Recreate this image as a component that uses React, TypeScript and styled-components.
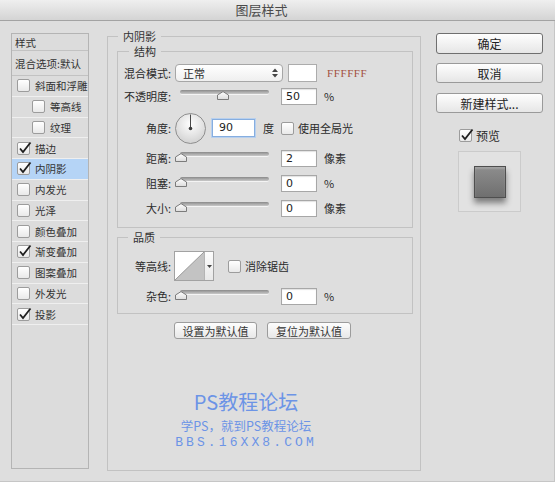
import styled, { createGlobalStyle } from 'styled-components';

const GlobalStyle = createGlobalStyle`
  html, body { margin: 0; padding: 0; background: #dedede; }
  body {
    font-family: "Noto Sans CJK SC", "Liberation Sans", sans-serif;
    font-size: 11px;
    color: #2b2b2b;
  }
  * { box-sizing: border-box; }
`;

const Window = styled.div`
  width: 555px;
  height: 482px;
  background: #dedede;
  display: flex;
  flex-direction: column;
  overflow: hidden;
  box-shadow: inset -1px -1px 0 #c6c6c6;
`;

const TitleBar = styled.div`
  height: 21px;
  flex-shrink: 0;
  background: linear-gradient(#efefef, #d4d4d4);
  border-bottom: 1px solid #a3a3a3;
  text-align: center;
  padding-right: 32px;
  font-size: 13px;
  line-height: 20px;
  color: #4a4a4a;
`;

const Body = styled.div`
  display: flex;
  align-items: flex-start;
  padding-left: 11px;
`;

/* ---------- left list ---------- */

const LeftPanel = styled.div`
  width: 78px;
  height: 436px;
  margin-top: 12px;
  border: 1px solid #b4b4b4;
  background: #dcdcdc;
  display: flex;
  flex-direction: column;
`;

const PanelHead = styled.div<{ $h: number }>`
  height: ${(p) => p.$h}px;
  border-bottom: 1px solid #c2c2c2;
  padding-left: 3px;
  display: flex;
  align-items: center;
  white-space: nowrap;
  font-size: 10.5px;
  color: #333;
`;

const LayerRow = styled.div<{ $indent?: boolean; $active?: boolean }>`
  height: 20.75px;
  display: flex;
  align-items: center;
  gap: 5px;
  padding-left: ${(p) => (p.$indent ? 20 : 5)}px;
  border-bottom: 1px solid #efefef;
  background: ${(p) => (p.$active ? '#b5d4f6' : 'transparent')};
  white-space: nowrap;
  font-size: 10.5px;
  color: #333;
`;

const Box = styled.span`
  position: relative;
  width: 13px;
  height: 13px;
  flex-shrink: 0;
  border: 1px solid #9c9c9c;
  border-radius: 2px;
  background: linear-gradient(#ffffff, #e9e9e9);
  display: inline-block;
`;

const Tick = styled.svg`
  position: absolute;
  left: 0;
  top: -2px;
`;

function Check({ on }: { on?: boolean }) {
  return (
    <Box>
      {on && (
        <Tick width="14" height="14" viewBox="0 0 14 14">
          <path d="M2 7.5 L5 11 L12.5 1.5" fill="none" stroke="#1f1f1f" strokeWidth="1.8" />
        </Tick>
      )}
    </Box>
  );
}

/* ---------- group boxes ---------- */

const Group = styled.fieldset<{ $w: number; $pad: string }>`
  margin: 0;
  min-width: 0;
  width: ${(p) => p.$w}px;
  border: 1px solid #c2c2c2;
  padding: ${(p) => p.$pad};
`;

const MainGroup = styled(Group)`
  margin-left: 18px;
  margin-top: 8px;
  height: 442px;
`;

const SubGroup = styled(Group)<{ $top: number }>`
  margin-top: ${(p) => p.$top}px;
`;

const Legend = styled.legend<{ $shift: number }>`
  padding: 0 5px;
  margin-left: ${(p) => p.$shift}px;
  line-height: 14px;
  font-size: 11px;
  color: #333;
`;

const Row = styled.div<{ $h: number; $top: number }>`
  display: flex;
  align-items: center;
  height: ${(p) => p.$h}px;
  margin-top: ${(p) => p.$top}px;
`;

const Label = styled.span`
  width: 48px;
  text-align: right;
  flex-shrink: 0;
  white-space: nowrap;
`;

const Select = styled.div`
  margin-left: 4px;
  width: 108px;
  height: 18px;
  border: 1px solid #a6a6a6;
  border-radius: 4px;
  background: linear-gradient(#ffffff, #efefef);
  display: flex;
  align-items: center;
  justify-content: space-between;
  padding: 0 4px 0 7px;
`;

const Swatch = styled.div`
  margin-left: 5px;
  width: 29px;
  height: 18px;
  background: #fff;
  border: 1px solid #acacac;
`;

const Hex = styled.span`
  margin-left: 10px;
  font-family: "Liberation Serif", serif;
  font-size: 11px;
  letter-spacing: 0.6px;
  color: #a2503e;
`;

const SliderWrap = styled.div`
  position: relative;
  margin-left: 9px;
  width: 89px;
  height: 18px;
  flex-shrink: 0;
`;

const Track = styled.div`
  margin-top: 3px;
  height: 4px;
  border-radius: 2px;
  background: linear-gradient(#8a8a8a, #c9c9c9);
  box-shadow: 0 1px 0 #f4f4f4;
`;

const Thumb = styled.svg`
  position: absolute;
  top: 4px;
  margin-left: -6px;
`;

function Slider({ value }: { value: number }) {
  return (
    <SliderWrap>
      <Track />
      <Thumb width="12" height="9" viewBox="0 0 12 9" style={{ left: `${value}%` }}>
        <defs>
          <linearGradient id="thumbG" x1="0" y1="0" x2="0" y2="1">
            <stop offset="0" stopColor="#ffffff" />
            <stop offset="1" stopColor="#dcdcdc" />
          </linearGradient>
        </defs>
        <polygon points="0.5,8.5 0.5,4 6,0.6 11.5,4 11.5,8.5" fill="url(#thumbG)" stroke="#7b7b7b" />
      </Thumb>
    </SliderWrap>
  );
}

const NumBox = styled.div<{ $w?: number; $focus?: boolean }>`
  margin-left: ${(p) => (p.$focus ? 6 : 12)}px;
  width: ${(p) => p.$w ?? 36}px;
  height: ${(p) => (p.$focus ? 18 : 17)}px;
  background: #fff;
  border: 1px solid ${(p) => (p.$focus ? '#86aee0' : '#a7a7a7')};
  box-shadow: ${(p) => (p.$focus ? '0 0 0 1px #b8d0ee' : 'inset 0 1px 1px rgba(0,0,0,0.12)')};
  padding-left: ${(p) => (p.$focus ? 6 : 4)}px;
  font-family: "DejaVu Sans", "Liberation Sans", sans-serif;
  font-size: 11px;
  line-height: 15px;
  color: #222;
`;

const Unit = styled.span<{ $gap?: number }>`
  margin-left: ${(p) => p.$gap ?? 7}px;
  white-space: nowrap;
`;

const Dial = styled.svg`
  margin-left: 4px;
  flex-shrink: 0;
`;

function AngleDial({ angle }: { angle: number }) {
  const r = (angle * Math.PI) / 180;
  const x2 = 15.5 + Math.cos(r) * 14;
  const y2 = 15.5 - Math.sin(r) * 14;
  return (
    <Dial width="31" height="31" viewBox="0 0 31 31">
      <defs>
        <radialGradient id="dialG" cx="50%" cy="35%" r="65%">
          <stop offset="0" stopColor="#ffffff" />
          <stop offset="1" stopColor="#d2d2d2" />
        </radialGradient>
      </defs>
      <circle cx="15.5" cy="15.5" r="15" fill="url(#dialG)" stroke="#8f8f8f" />
      <line x1="15.5" y1="15.5" x2={x2} y2={y2} stroke="#4a4a4a" strokeWidth="1" />
      <circle cx="15.5" cy="15.5" r="1.8" fill="#3d3d3d" />
    </Dial>
  );
}

const Inline = styled.span<{ $gap: number }>`
  display: flex;
  align-items: center;
  gap: 4px;
  margin-left: ${(p) => p.$gap}px;
  white-space: nowrap;
`;

const Contour = styled.div`
  margin-left: 3px;
  width: 40px;
  height: 30px;
  border: 1px solid #a2a2a2;
  display: flex;
  background: #fff;
`;

const ContourDrop = styled.div`
  width: 9px;
  border-left: 1px solid #b4b4b4;
  background: linear-gradient(#fdfdfd, #e8e8e8);
  display: flex;
  align-items: center;
  justify-content: center;
`;

const ButtonRow = styled.div`
  display: flex;
  gap: 10px;
  margin-top: 8px;
  padding-left: 57px;
`;

const SmallButton = styled.div<{ $w: number }>`
  width: ${(p) => p.$w}px;
  height: 17px;
  border: 1px solid #9c9c9c;
  border-radius: 3px;
  background: linear-gradient(#fdfdfd, #e8e8e8);
  display: flex;
  align-items: center;
  justify-content: center;
  color: #333;
`;

const Watermark = styled.div`
  margin-top: 53px;
  margin-left: 59px;
  width: 140px;
  display: flex;
  flex-direction: column;
  align-items: center;
  color: #6c94e6;
`;

const MarkTitle = styled.div`
  font-size: 20px;
  line-height: 20px;
`;

const MarkSub = styled.div`
  margin-top: 7px;
  font-size: 12.5px;
  line-height: 14px;
  white-space: nowrap;
`;

const MarkUrl = styled.div`
  margin-top: 3px;
  font-family: "Liberation Mono", monospace;
  font-size: 13px;
  line-height: 13px;
  letter-spacing: 3.1px;
  white-space: nowrap;
`;

/* ---------- right column ---------- */

const RightCol = styled.div`
  margin-left: 15px;
  margin-top: 12px;
  width: 107px;
  display: flex;
  flex-direction: column;
`;

const DialogButton = styled.div<{ $primary?: boolean; $top: number }>`
  margin-top: ${(p) => p.$top}px;
  height: ${(p) => (p.$primary ? 21 : 20)}px;
  border: 1px solid ${(p) => (p.$primary ? '#6f6f6f' : '#9a9a9a')};
  border-radius: 3px;
  background: linear-gradient(#fefefe, #e6e6e6);
  display: flex;
  align-items: center;
  justify-content: center;
  font-size: 12px;
  color: #222;
`;

const PreviewToggle = styled.div`
  margin-top: 14px;
  margin-left: 23px;
  display: flex;
  align-items: center;
  gap: 4px;
  font-size: 12px;
`;

const PreviewBox = styled.div`
  margin-top: 7px;
  margin-left: 22px;
  width: 63px;
  height: 61px;
  border: 1px solid #cbcbcb;
  background: #e2e2e2;
  display: flex;
  align-items: center;
  justify-content: center;
`;

const PreviewSquare = styled.div`
  width: 32px;
  height: 32px;
  background: linear-gradient(#8d8d8d, #6f6f6f);
  border: 1px solid #4e4e4e;
  box-shadow: 0 5px 6px rgba(0, 0, 0, 0.45), inset 0 2px 2px rgba(255, 255, 255, 0.2);
`;

const layers = [
  { name: '斜面和浮雕', on: false },
  { name: '等高线', on: false, indent: true },
  { name: '纹理', on: false, indent: true },
  { name: '描边', on: true },
  { name: '内阴影', on: true, active: true },
  { name: '内发光', on: false },
  { name: '光泽', on: false },
  { name: '颜色叠加', on: false },
  { name: '渐变叠加', on: true },
  { name: '图案叠加', on: false },
  { name: '外发光', on: false },
  { name: '投影', on: true },
];

const sliders = [
  { label: '距离:', value: 2, pos: 1, unit: '像素', top: 5 },
  { label: '阻塞:', value: 0, pos: 1, unit: '%', top: 7 },
  { label: '大小:', value: 0, pos: 1, unit: '像素', top: 7 },
];

export default function App() {
  return (
    <Window>
      <GlobalStyle />
      <TitleBar>图层样式</TitleBar>
      <Body>
        <LeftPanel>
          <PanelHead $h={17}>样式</PanelHead>
          <PanelHead $h={25}>混合选项:默认</PanelHead>
          {layers.map((l) => (
            <LayerRow key={l.name} $indent={l.indent} $active={l.active}>
              <Check on={l.on} />
              {l.name}
            </LayerRow>
          ))}
        </LeftPanel>

        <MainGroup $w={314} $pad="1px 7px 0 9px">
          <Legend $shift={1}>内阴影</Legend>
          <SubGroup $w={296} $pad="6px 0 10px 5px" $top={0}>
            <Legend $shift={6}>结构</Legend>
            <Row $h={18} $top={0}>
              <Label>混合模式:</Label>
              <Select>
                正常
                <svg width="6" height="10" viewBox="0 0 6 10">
                  <polygon points="0,4 3,0.5 6,4" fill="#444" />
                  <polygon points="0,6 3,9.5 6,6" fill="#444" />
                </svg>
              </Select>
              <Swatch />
              <Hex>FFFFFF</Hex>
            </Row>
            <Row $h={18} $top={5}>
              <Label>不透明度:</Label>
              <Slider value={48} />
              <NumBox>50</NumBox>
              <Unit>%</Unit>
            </Row>
            <Row $h={32} $top={7}>
              <Label>角度:</Label>
              <AngleDial angle={90} />
              <NumBox $w={43} $focus>
                90
              </NumBox>
              <Unit $gap={8}>度</Unit>
              <Inline $gap={7}>
                <Check />
                使用全局光
              </Inline>
            </Row>
            {sliders.map((s) => (
              <Row key={s.label} $h={18} $top={s.top}>
                <Label>{s.label}</Label>
                <Slider value={s.pos} />
                <NumBox>{s.value}</NumBox>
                <Unit>{s.unit}</Unit>
              </Row>
            ))}
          </SubGroup>

          <SubGroup $w={296} $pad="7px 0 8px 5px" $top={2}>
            <Legend $shift={5}>品质</Legend>
            <Row $h={30} $top={0}>
              <Label>等高线:</Label>
              <Contour>
                <svg width="29" height="28" viewBox="0 0 29 28">
                  <polygon points="0,28 29,0 29,28" fill="#c3c3c3" />
                  <line x1="0" y1="28" x2="29" y2="0" stroke="#9a9a9a" strokeWidth="1" />
                </svg>
                <ContourDrop>
                  <svg width="5" height="3" viewBox="0 0 5 3">
                    <polygon points="0,0 5,0 2.5,3" fill="#444" />
                  </svg>
                </ContourDrop>
              </Contour>
              <Inline $gap={14}>
                <Check />
                消除锯齿
              </Inline>
            </Row>
            <Row $h={18} $top={6}>
              <Label>杂色:</Label>
              <Slider value={1} />
              <NumBox>0</NumBox>
              <Unit>%</Unit>
            </Row>
          </SubGroup>

          <ButtonRow>
            <SmallButton $w={83}>设置为默认值</SmallButton>
            <SmallButton $w={84}>复位为默认值</SmallButton>
          </ButtonRow>

          <Watermark>
            <MarkTitle>PS教程论坛</MarkTitle>
            <MarkSub>学PS，就到PS教程论坛</MarkSub>
            <MarkUrl>BBS.16XX8.COM</MarkUrl>
          </Watermark>
        </MainGroup>

        <RightCol>
          <DialogButton $primary $top={0}>
            确定
          </DialogButton>
          <DialogButton $top={9}>取消</DialogButton>
          <DialogButton $top={10}>新建样式...</DialogButton>
          <PreviewToggle>
            <Check on />
            预览
          </PreviewToggle>
          <PreviewBox>
            <PreviewSquare />
          </PreviewBox>
        </RightCol>
      </Body>
    </Window>
  );
}
